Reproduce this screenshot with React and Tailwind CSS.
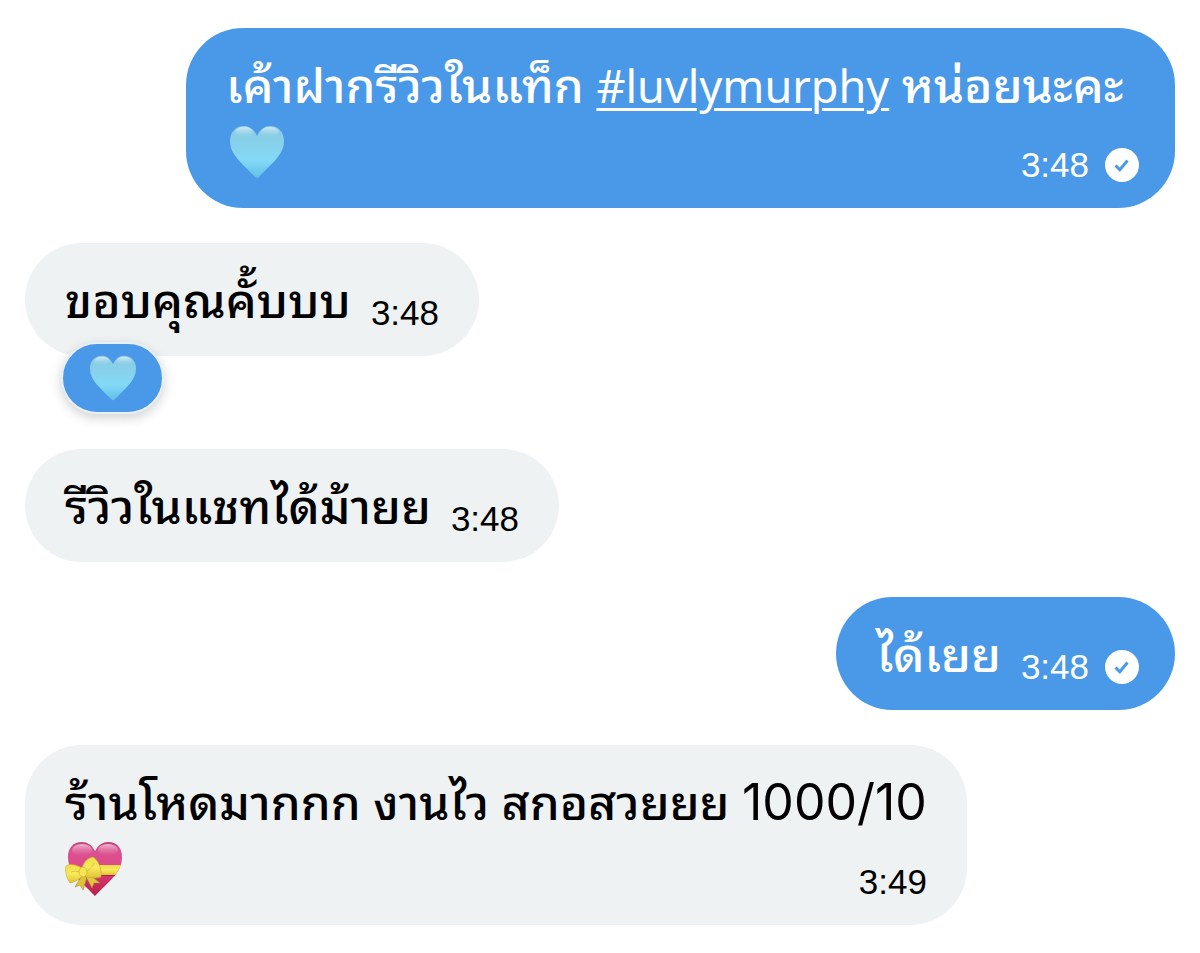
const MESSAGES = [
  {
    id: 1,
    mine: true,
    time: '3:48',
    wide: true,
    emoji: 'blue',
    parts: [{ text: 'เค้าฝากรีวิวในแท็ก ' }, { tag: '#luvlymurphy' }, { text: ' หน่อยนะคะ' }]
  },
  { id: 2, time: '3:48', reaction: true, parts: [{ text: 'ขอบคุณคั้บบบ' }] },
  { id: 3, time: '3:48', parts: [{ text: 'รีวิวในแชทได้ม้ายย' }] },
  { id: 4, mine: true, time: '3:48', parts: [{ text: 'ได้เยย' }] },
  {
    id: 5,
    time: '3:49',
    wide: true,
    emoji: 'ribbon',
    parts: [{ text: 'ร้านโหดมากกก งานไว สกอสวยยย ' }, { number: '1000/10' }]
  }
]

function BlueHeart({ className }) {
  return (
    <svg viewBox="0 0 54 54" className={className} role="img" aria-label="light blue heart">
      <defs>
        <linearGradient id="heart-body" x1="0" y1="0" x2="0" y2="1">
          <stop offset="0" stopColor="#8ccbe2" />
          <stop offset="0.3" stopColor="#87d0ea" />
          <stop offset="0.65" stopColor="#84d9f5" />
          <stop offset="1" stopColor="#62bfe9" />
        </linearGradient>
        <linearGradient id="heart-shine" x1="0" y1="0" x2="0" y2="1">
          <stop offset="0" stopColor="#d9eff5" stopOpacity="0.9" />
          <stop offset="1" stopColor="#9fd8ea" stopOpacity="0" />
        </linearGradient>
      </defs>
      <path
        d="M27 11C24 4 19 1 14 1C6 1 0 7 0 16C0 30 13 39 25 52Q27 54 29 52C41 39 54 30 54 16C54 7 48 1 40 1C35 1 30 4 27 11Z"
        fill="url(#heart-body)"
      />
      <ellipse cx="14" cy="7" rx="9" ry="5" fill="url(#heart-shine)" />
      <ellipse cx="40" cy="7" rx="9" ry="5" fill="url(#heart-shine)" />
    </svg>
  )
}

function RibbonHeart({ className }) {
  return (
    <svg viewBox="0 0 58 56" className={className} role="img" aria-label="heart with ribbon">
      <defs>
        <linearGradient id="pink-body" x1="0" y1="0" x2="0" y2="1">
          <stop offset="0" stopColor="#b83d7d" />
          <stop offset="0.15" stopColor="#d9538f" />
          <stop offset="0.4" stopColor="#de4a8c" />
          <stop offset="0.7" stopColor="#cf3168" />
          <stop offset="1" stopColor="#b51e48" />
        </linearGradient>
        <linearGradient id="pink-shine" x1="0" y1="0" x2="0" y2="1">
          <stop offset="0" stopColor="#f6bdd6" stopOpacity="0.95" />
          <stop offset="1" stopColor="#e477a8" stopOpacity="0" />
        </linearGradient>
        <linearGradient id="ribbon" x1="0" y1="0" x2="0" y2="1">
          <stop offset="0" stopColor="#f0dc48" />
          <stop offset="0.5" stopColor="#f8ea5a" />
          <stop offset="1" stopColor="#dfc137" />
        </linearGradient>
        <clipPath id="pink-clip">
          <path d="M30 10C27 4 22 1 17 1C8 1 3 7 3 16C3 32 17 41 30 55C43 41 57 32 57 16C57 7 52 1 43 1C38 1 33 4 30 10Z" />
        </clipPath>
      </defs>
      <g clipPath="url(#pink-clip)">
        <rect width="58" height="56" fill="url(#pink-body)" />
        <ellipse cx="17" cy="9" rx="10" ry="6" fill="url(#pink-shine)" />
        <ellipse cx="43" cy="9" rx="10" ry="6" fill="url(#pink-shine)" />
        <rect x="20" y="24" width="38" height="10" fill="url(#ribbon)" />
        <path d="M20 34.5h38" stroke="#a3244a" />
      </g>
      <path d="M17 34L10 46L15 44L18 49L22 36Z" fill="#dfc23c" stroke="#a9882a" strokeWidth="0.6" />
      <path d="M20 34L27 47L29 42L35 42L25 34Z" fill="#e2c741" stroke="#a9882a" strokeWidth="0.6" />
      <path d="M17 27C12 24 5 22 1 25C0 30 1 36 5 42C11 41 15 38 18 34Z" fill="url(#ribbon)" stroke="#c6a62f" strokeWidth="0.6" />
      <path d="M17 27C19 20 23 17 28 16C33 19 37 27 36 36C30 38 23 37 18 34Z" fill="url(#ribbon)" stroke="#c6a62f" strokeWidth="0.6" />
      <path d="M6 31C9 30 12 30 15 31M22 30C25 28 28 25 29 22" fill="none" stroke="#dcc23c" />
      <ellipse cx="18" cy="31" rx="4" ry="5" fill="#f6e455" stroke="#c6a62f" strokeWidth="0.6" />
    </svg>
  )
}

function SeenBadge() {
  return (
    <svg viewBox="0 0 34 34" className="size-[34px]" role="img" aria-label="Seen">
      <circle cx="17" cy="17" r="17" fill="#fff" />
      <path d="M10.5 17.5L14.8 21.8L22.5 12.5" fill="none" stroke="#4a99e9" strokeWidth="3" />
    </svg>
  )
}

function Stamp({ message }) {
  return (
    <div className="flex shrink-0 items-center gap-4 font-['Liberation_Sans',sans-serif] text-[35px] leading-[40px] font-normal">
      <time>{message.time}</time>
      {message.mine && <SeenBadge />}
    </div>
  )
}

function Body({ parts }) {
  return (
    <p className="h-[67px] text-[48px] leading-[62px] font-medium whitespace-nowrap">
      {parts.map((part, i) => {
        if (part.tag) {
          return (
            <a key={i} href="#luvlymurphy" className="font-['Noto_Sans',sans-serif] text-[45px] leading-none font-normal underline decoration-3 underline-offset-5">
              {part.tag}
            </a>
          )
        }
        if (part.number) return <span key={i} className="font-['Inter',sans-serif] text-[50px] leading-none font-normal">{part.number}</span>
        return <span key={i}>{part.text}</span>
      })}
    </p>
  )
}

function Bubble({ message }) {
  const color = message.mine ? 'bg-[#4a99e9] text-white' : 'bg-[#eef2f3] text-black'
  const fill = message.mine && message.wide

  return (
    <li className={message.mine ? 'flex justify-end' : 'flex justify-start'}>
      <div className={`relative ${message.reaction ? 'mb-[58px]' : ''} ${fill ? 'w-[86%]' : ''}`}>
        <div className={`rounded-[57px] py-[23px] ${message.mine ? 'pl-10 pr-9' : 'px-10'} ${color}`}>
          {message.wide ? (
            <>
              <Body parts={message.parts} />
              <div className="flex h-[67px] items-center justify-between">
                {message.emoji === 'blue' ? <BlueHeart className="mx-1 size-[54px]" /> : <RibbonHeart className="h-[56px] w-[58px]" />}
                <div className="self-end"><Stamp message={message} /></div>
              </div>
            </>
          ) : (
            <div className="flex items-end gap-5">
              <Body parts={message.parts} />
              <Stamp message={message} />
            </div>
          )}
        </div>
        {message.reaction && (
          <button
            type="button"
            aria-label="Reactions"
            className="absolute left-9 top-[99px] flex h-[72px] w-[103px] items-center justify-center rounded-full border-2 border-[#e8f0f6] bg-[#4a99e9] shadow-[0_4px_12px_rgba(0,0,0,0.18)]"
          >
            <BlueHeart className="size-[46px]" />
          </button>
        )}
      </div>
    </li>
  )
}

export default function App() {
  return (
    <main className="min-h-screen bg-white px-[25px] py-7 font-['Noto_Sans_Thai_Looped','Noto_Looped_Thai','Loma','Garuda','Laksaman','Noto_Sans',sans-serif]">
      <ul className="flex flex-col gap-[35px]">
        {MESSAGES.map(message => (
          <Bubble key={message.id} message={message} />
        ))}
      </ul>
    </main>
  )
}
